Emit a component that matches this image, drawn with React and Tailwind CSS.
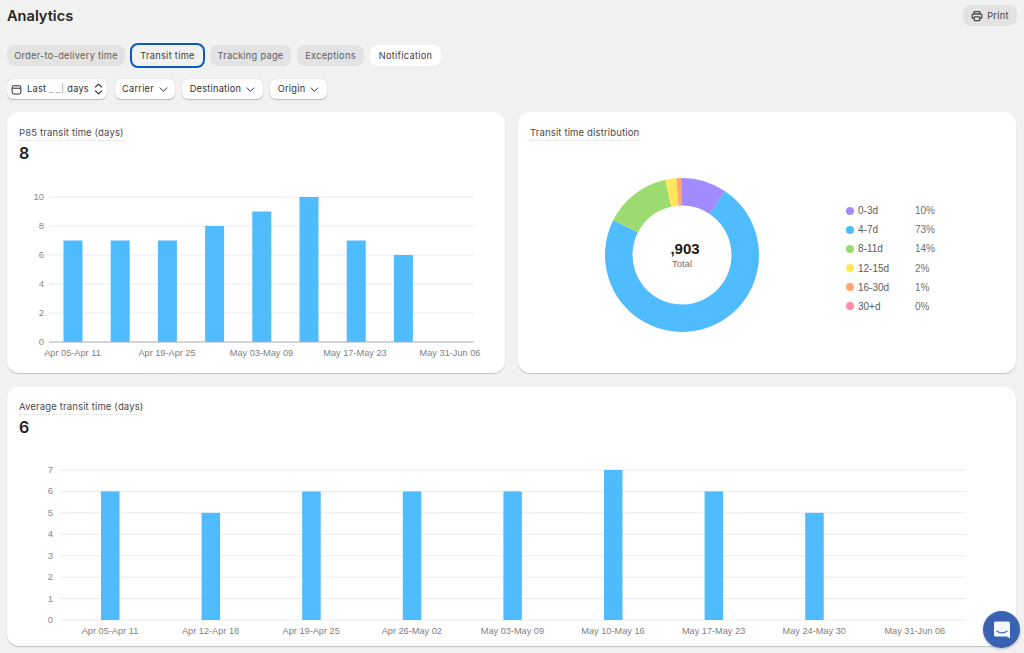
import React from "react";

const BLUE = "#4fbcff";

function arc(cx, cy, R, r, a0, a1) {
  const p = (rad, a) => {
    const t = (a * Math.PI) / 180;
    return `${(cx + rad * Math.sin(t)).toFixed(2)} ${(cy - rad * Math.cos(t)).toFixed(2)}`;
  };
  const large = a1 - a0 > 180 ? 1 : 0;
  return `M${p(R, a0)} A${R} ${R} 0 ${large} 1 ${p(R, a1)} L${p(r, a1)} A${r} ${r} 0 ${large} 0 ${p(r, a0)} Z`;
}

function Chev() {
  return (
    <svg width="9" height="9" viewBox="0 0 10 10" fill="none" stroke="#303030" strokeWidth="1.100" strokeLinecap="round" strokeLinejoin="round">
      <path d="M1.200 3.200 5 7l3.800-3.800" />
    </svg>
  );
}

function Tab({ children, variant }) {
  if (variant === "active")
    return <button className="-my-[2px] h-[25px] w-[75px] rounded-lg border-2 border-[#0a5bc4] bg-[#f1f1f1] text-[9.200px] font-normal tracking-[0.3px] text-[#404040]">{children}</button>;
  if (variant === "white")
    return <button className="ml-[1px] h-[21px] w-[71px] rounded-lg bg-white text-[9.200px] font-normal tracking-[0.3px] text-[#404040]">{children}</button>;
  return <button className={`h-[21px] rounded-lg bg-[#e3e3e3] text-[9.200px] font-normal tracking-[0.3px] text-[#5c5c5c] ${variant}`}>{children}</button>;
}

function Filter({ children, className }) {
  return (
    <button className={`flex h-[20px] items-center justify-center gap-[5px] rounded-md bg-white text-[9.200px] font-normal tracking-[0.25px] text-[#303030] shadow-[0_1px_1px_rgba(0,0,0,0.22),0_0_1px_rgba(0,0,0,0.2)] ${className}`}>
      {children}
    </button>
  );
}

function Title({ children }) {
  return (
    <div className="w-fit border-b border-dotted border-[#dadada] pb-[1px] text-[9.500px] leading-[13px] tracking-[0.15px] text-[#4a4a4a]">
      {children}
    </div>
  );
}

const F = "'Liberation Sans', Arial, sans-serif";

function Chart1() {
  const vals = [7, 7, 7, 8, 9, 10, 7, 6];
  const y = (v) => 179 - v * 14.5;
  return (
    <svg width="498" height="199" viewBox="0 0 498 199" className="block" style={{ fontFamily: F }}>
      {[2, 4, 6, 8, 10].map((v) => (
        <line key={v} x1="42" x2="467" y1={y(v)} y2={y(v)} stroke="#e6ebf4" strokeWidth="1" />
      ))}
      {vals.map((v, i) => (
        <rect key={i} x={56.5 + i * 47.2} y={y(v)} width="19" height={v * 14.5} fill={BLUE} />
      ))}
      <line x1="42" x2="467" y1="179" y2="179" stroke="#a8abb2" strokeWidth="1" />
      {[0, 2, 4, 6, 8, 10].map((v) => (
        <text key={v} x="37" y={y(v) + 3} textAnchor="end" fontSize="9.5" fill="#8a8a8a">{v}</text>
      ))}
      {[["Apr 05-Apr 11", 65.5], ["Apr 19-Apr 25", 160], ["May 03-May 09", 254.5], ["May 17-May 23", 348], ["May 31-Jun 06", 443]].map(([t, x]) => (
        <text key={t} x={x} y="192.500" textAnchor="middle" fontSize="9.200" fill="#7f7f7f">{t}</text>
      ))}
    </svg>
  );
}

function Chart2() {
  const vals = [6, 5, 6, 6, 6, 7, 6, 5];
  const y = (v) => 183 - v * 21.43;
  const labels = ["Apr 05-Apr 11", "Apr 12-Apr 18", "Apr 19-Apr 25", "Apr 26-May 02", "May 03-May 09", "May 10-May 16", "May 17-May 23", "May 24-May 30", "May 31-Jun 06"];
  return (
    <svg width="1009" height="202" viewBox="0 0 1009 202" className="block" style={{ fontFamily: F }}>
      {[0, 1, 2, 3, 4, 5, 6, 7].map((v) => (
        <line key={v} x1="53" x2="959" y1={y(v)} y2={y(v)} stroke="#e6ebf4" strokeWidth="1" />
      ))}
      {vals.map((v, i) => (
        <rect key={i} x={94 + i * 100.6} y={y(v)} width="18.500" height={v * 21.43} fill={BLUE} />
      ))}
      {[0, 1, 2, 3, 4, 5, 6, 7].map((v) => (
        <text key={v} x="46" y={y(v) + 3} textAnchor="end" fontSize="9.5" fill="#8a8a8a">{v}</text>
      ))}
      {labels.map((t, i) => (
        <text key={t} x={103 + i * 100.6} y="196.500" textAnchor="middle" fontSize="9.200" fill="#7f7f7f">{t}</text>
      ))}
    </svg>
  );
}

function Donut() {
  const segs = [
    [0, 34, "#a28bff"],
    [34, 297, BLUE],
    [297, 347.5, "#9bdb6f"],
    [347.5, 355.8, "#ffe45c"],
    [355.8, 360, "#ffa671"],
  ];
  return (
    <div className="relative h-[156px] w-[156px]">
      <svg width="156" height="156" viewBox="0 0 156 156" className="block">
        {segs.map(([a, b, c]) => (
          <path key={c} d={arc(78, 78, 77, 49.5, a, b)} fill={c} />
        ))}
      </svg>
      <div className="absolute inset-0 flex flex-col items-center justify-center pb-[2px]" style={{ fontFamily: F }}>
        <div className="pl-[6px] text-[15px] font-bold leading-[17px] text-[#202020]">,903</div>
        <div className="mt-[1px] text-[9.500px] leading-[11px] text-[#707070]">Total</div>
      </div>
    </div>
  );
}

const legend = [
  ["0-3d", "10%", "#a28bff"],
  ["4-7d", "73%", BLUE],
  ["8-11d", "14%", "#9bdb6f"],
  ["12-15d", "2%", "#ffe45c"],
  ["16-30d", "1%", "#ffa671"],
  ["30+d", "0%", "#ff8fa6"],
];

export default function App() {
  return (
    <div className="relative h-[653px] w-[1024px] overflow-hidden bg-[#f1f1f1] px-[7px] font-['Inter',sans-serif]">
      <header className="flex h-[45px] items-start justify-between">
        <h1 className="mt-[6px] text-[14.600px] font-semibold leading-[20px] text-[#262626]">Analytics</h1>
        <button className="mt-[5px] flex h-[21px] w-[54px] items-center justify-center gap-[4px] rounded-lg bg-[#e3e3e3] text-[9.200px] font-normal tracking-[0.3px] text-[#404040]">
          <svg width="12" height="12" viewBox="0 0 12 12" fill="none" stroke="#4a4a4a" strokeWidth="1.300">
            <path d="M3.200 4V1.600h5.600V4" />
            <rect x="1.200" y="4" width="9.600" height="4.400" rx="1.200" />
            <rect x="3.200" y="6.800" width="5.600" height="3.800" rx="0.600" fill="#e3e3e3" />
          </svg>
          Print
        </button>
      </header>

      <nav className="flex h-[21px] gap-[5px]">
        <Tab variant="w-[118px]">Order-to-delivery time</Tab>
        <Tab variant="active">Transit time</Tab>
        <Tab variant="w-[81px]">Tracking page</Tab>
        <Tab variant="ml-[1px] w-[67px]">Exceptions</Tab>
        <Tab variant="white">Notification</Tab>
      </nav>

      <div className="mt-[13px] flex gap-[7px]">
        <Filter className="mr-[1px] w-[100px]">
          <svg width="11" height="11" viewBox="0 0 12 12" fill="none" stroke="#303030" strokeWidth="1.100">
            <rect x="1.200" y="1.800" width="9.600" height="9" rx="2" />
            <path d="M1.200 4.600h9.600" />
          </svg>
          <span>Last <span className="text-[#a0a0a0]">_ _|</span> days</span>
          <svg width="9" height="12" viewBox="0 0 9 12" fill="none" stroke="#303030" strokeWidth="1.100" strokeLinecap="round" strokeLinejoin="round">
            <path d="M1.500 4 4.500 1.200 7.500 4M1.500 8l3 2.800L7.500 8" />
          </svg>
        </Filter>
        <Filter className="w-[60px]">Carrier<Chev /></Filter>
        <Filter className="w-[81px]">Destination<Chev /></Filter>
        <Filter className="w-[57px]">Origin<Chev /></Filter>
      </div>

      <div className="mt-[13px] grid grid-cols-[498px_498px] gap-x-[13px] gap-y-[14px]">
        <section className="h-[261px] rounded-xl bg-white shadow-[0_1px_1px_rgba(0,0,0,0.2)]">
          <div className="pl-[12px] pt-[14px]">
            <Title>P85 transit time (days)</Title>
            <div className="mt-[2px] text-[16px] font-semibold leading-[20px] text-[#202020]">8</div>
          </div>
          <Chart1 />
        </section>

        <section className="h-[261px] rounded-xl bg-white shadow-[0_1px_1px_rgba(0,0,0,0.2)]">
          <div className="pl-[12px] pt-[14px]">
            <Title>Transit time distribution</Title>
          </div>
          <div className="flex items-start pl-[86px] pt-[36px]">
            <Donut />
            <ul className="ml-[86px] mt-[28px] flex flex-col gap-[8.200px] text-[10px] leading-[11px] text-[#5c5c5c]" style={{ fontFamily: F }}>
              {legend.map(([l, v, c]) => (
                <li key={l} className="flex items-center">
                  <span className="h-[8px] w-[8px] rounded-full" style={{ background: c }} />
                  <span className="ml-[4px] w-[57px]">{l}</span>
                  <span className="text-[#707070]">{v}</span>
                </li>
              ))}
            </ul>
          </div>
        </section>

        <section className="col-span-2 h-[259px] rounded-xl bg-white shadow-[0_1px_1px_rgba(0,0,0,0.2)]">
          <div className="pl-[12px] pt-[13px]">
            <Title>Average transit time (days)</Title>
            <div className="mt-[2px] text-[16px] font-semibold leading-[20px] text-[#202020]">6</div>
          </div>
          <Chart2 />
        </section>
      </div>

      <button className="absolute left-[983px] top-[611px] flex h-[37px] w-[37px] items-center justify-center rounded-full bg-[#3a62b3] shadow-[0_1px_3px_rgba(0,0,0,0.25)]">
        <svg width="20" height="20" viewBox="0 0 20 20">
          <path d="M3.600 1.500h12.800a1.600 1.600 0 0 1 1.600 1.600v15.200l-3.400-1.800H3.600A1.600 1.600 0 0 1 2 14.900V3.100a1.600 1.600 0 0 1 1.600-1.600Z" fill="#f3f6fb" />
          <path d="M5 11.200c3 2 7 2 10 0" fill="none" stroke="#3a62b3" strokeWidth="1.200" strokeLinecap="round" />
        </svg>
      </button>
    </div>
  );
}
